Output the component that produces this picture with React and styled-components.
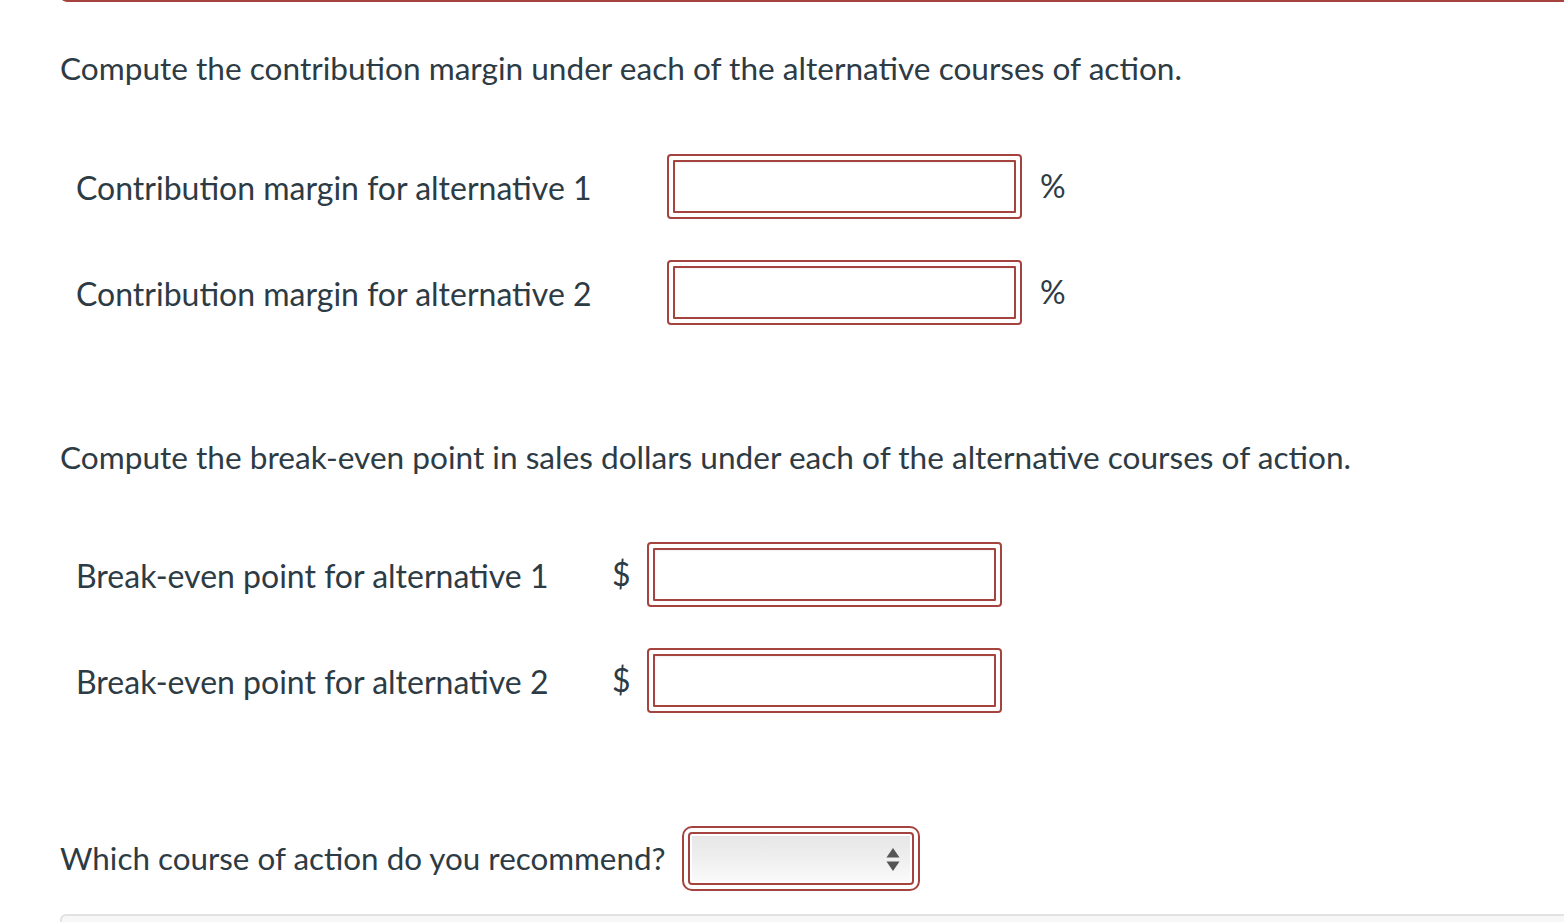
import React from 'react';
import styled, { createGlobalStyle } from 'styled-components';

const GlobalStyle = createGlobalStyle`
  body {
    margin: 0;
    background: #fff;
    font-family: Lato, "Open Sans", sans-serif;
    color: #2d3b45;
  }
`;

const errorRed = '#a5443f';

const Page = styled.div`
  width: 1564px;
  overflow: hidden;
`;

const TopEdge = styled.div`
  margin-left: 61px;
  height: 8px;
  margin-top: -8px;
  border-bottom: 2px solid ${errorRed};
  border-left: 2px solid ${errorRed};
  border-bottom-left-radius: 6px;
`;

const Heading = styled.p`
  margin: ${(p) => p.top}px 0 0 60px;
  font-size: 31.6px;
  line-height: 40px;
`;

const Rows = styled.div`
  margin-top: ${(p) => p.top}px;
  display: flex;
  flex-direction: column;
  gap: 41px;
  padding-left: 76px;
`;

const Row = styled.div`
  display: flex;
  align-items: center;
  height: 65px;
`;

const Label = styled.span`
  width: ${(p) => p.width}px;
  font-size: 32px;
  line-height: 40px;
  flex-shrink: 0;
  margin-top: 3px;
`;

const Unit = styled.span`
  font-size: 32px;
  line-height: 40px;
  width: ${(p) => (p.width ? `${p.width}px` : 'auto')};
  margin-left: ${(p) => p.gap || 0}px;
  margin-top: -2px;
`;

const Frame = styled.span`
  display: inline-flex;
  border: 2px solid ${errorRed};
  border-radius: ${(p) => p.radius || 4}px;
  padding: 4px;
  box-sizing: border-box;
  width: ${(p) => p.width}px;
  height: 65px;
  position: relative;
  flex-shrink: 0;
`;

const TextBox = styled.input`
  flex: 1;
  min-width: 0;
  border: 2px solid ${errorRed};
  border-radius: 1px;
  margin: 0;
  padding: 0 10px;
  font: inherit;
  font-size: 20px;
  background: #fff;
  outline: none;
  box-shadow: inset 0 1px 2px rgba(0, 0, 0, 0.06);
`;

const SelectBox = styled.select`
  flex: 1;
  appearance: none;
  -webkit-appearance: none;
  border: 2px solid ${errorRed};
  border-radius: 4px;
  margin: 0;
  padding: 0 10px;
  font-size: 20px;
  font-family: inherit;
  box-shadow: inset 0 0 0 2px #fff;
  background-image: linear-gradient(#e6e6e6, #efefef 50%, #fbfbfb);
  outline: none;
`;

const Arrows = styled.svg`
  position: absolute;
  right: 18px;
  top: 20px;
  pointer-events: none;
`;

const Question = styled.div`
  margin: 113px 0 0 60px;
  display: flex;
  align-items: center;
  gap: 16px;
  height: 65px;
`;

const QuestionText = styled.span`
  font-size: 31.4px;
  line-height: 40px;
  margin-top: -2px;
`;

const NextPanel = styled.div`
  margin: 23px 0 0 60px;
  height: 40px;
  border: 2px solid #e2e2e2;
  border-right: none;
  border-top-left-radius: 6px;
  background: #f7f7f7;
`;

const marginRows = ['Contribution margin for alternative 1', 'Contribution margin for alternative 2'];
const breakEvenRows = ['Break-even point for alternative 1', 'Break-even point for alternative 2'];

const App = () => {
  return (
    <Page>
      <GlobalStyle />
      <TopEdge />
      <Heading top={46}>Compute the contribution margin under each of the alternative courses of action.</Heading>
      <Rows top={66}>
        {marginRows.map((label) => (
          <Row key={label}>
            <Label width={591}>{label}</Label>
            <Frame width={355}>
              <TextBox type="text" />
            </Frame>
            <Unit gap={18}>%</Unit>
          </Row>
        ))}
      </Rows>
      <Heading top={112}>Compute the break-even point in sales dollars under each of the alternative courses of action.</Heading>
      <Rows top={65}>
        {breakEvenRows.map((label) => (
          <Row key={label}>
            <Label width={536}>{label}</Label>
            <Unit width={35}>$</Unit>
            <Frame width={355}>
              <TextBox type="text" />
            </Frame>
          </Row>
        ))}
      </Rows>
      <Question>
        <QuestionText>Which course of action do you recommend?</QuestionText>
        <Frame width={238} radius={10}>
          <SelectBox defaultValue="">
            <option value="" />
            <option value="1">Alternative 1</option>
            <option value="2">Alternative 2</option>
          </SelectBox>
          <Arrows width="14" height="24" viewBox="0 0 14 24">
            <path d="M7 0 L13.5 9.5 L0.5 9.5 Z" fill="#555" />
            <path d="M0.5 13.5 L13.5 13.5 L7 23 Z" fill="#555" />
          </Arrows>
        </Frame>
      </Question>
      <NextPanel />
    </Page>
  );
};

export default App;
